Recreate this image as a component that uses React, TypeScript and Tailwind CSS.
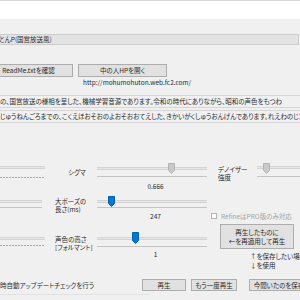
import React from 'react';

type Thumb = { left: number; top: number; h: number; color: 'gray' | 'blue' };

const ThumbIcon: React.FC<{ h: number; color: 'gray' | 'blue' }> = ({ h, color }) => {
  const fill = color === 'blue' ? '#0078d7' : '#c9c9c9';
  const stroke = color === 'blue' ? '#0063b1' : '#b4b4b4';
  return (
    <svg width="7" height={h} viewBox={`0 0 7 ${h}`}>
      <path d={`M0.5 0.5 H6.5 V${h - 3.5} L3.5 ${h - 0.5} L0.5 ${h - 3.5} Z`} fill={fill} stroke={stroke} strokeWidth="1" />
    </svg>
  );
};

// groove + tick line, thumb sits on top
const Track: React.FC<{
  width: string;
  grooveMt: string;
  tickMt: string;
  dotted?: boolean;
  thumb?: Thumb;
  value?: string;
  valueMt?: string;
}> = ({ width, grooveMt, tickMt, dotted, thumb, value, valueMt }) => (
  <div className={`relative flex flex-col shrink-0 ${width}`}>
    <div className={`h-[3px] bg-[#e6e6e6] border-y border-[#d4d4d4] ${grooveMt}`} />
    <div
      className={`h-px ${tickMt} ${
        dotted
          ? 'bg-[repeating-linear-gradient(90deg,#a8a8a8_0_2px,transparent_2px_3px)]'
          : 'bg-[#c4c4c4]'
      }`}
    />
    {value && <div className={`h-[7px] text-center pl-[7px] ${valueMt}`}>{value}</div>}
    {thumb && (
      <div className="absolute flex" style={{ left: thumb.left, top: thumb.top }}>
        <ThumbIcon h={thumb.h} color={thumb.color} />
      </div>
    )}
  </div>
);

const Button: React.FC<{ className: string; children: React.ReactNode }> = ({ className, children }) => (
  <div className={`flex items-center justify-center shrink-0 border border-[#adadad] bg-[#e1e1e1] ${className}`}>
    {children}
  </div>
);

const App: React.FC = () => {
  return (
    <div className="w-[300px] h-[300px] overflow-hidden bg-[#f0f0f0] text-[6.5px] leading-[7px] text-[#2a2a2a] whitespace-nowrap font-['Noto_Sans_CJK_JP',sans-serif] [font-feature-settings:'palt']">
      {/* top white strip */}
      <div className="h-[19px] bg-white border-t border-[#d8d8d8]" />

      {/* title box */}
      <div className="mt-[15px] h-[11px] w-[299px] flex items-center bg-[#e3e3e3] border-y border-r border-[#cccccc] overflow-hidden">
        <span className="-ml-px">とんP(国営放送風)</span>
      </div>

      {/* buttons */}
      <div className="mt-[19px] flex gap-[5px]">
        <Button className="ml-[-16px] w-[89px] h-[13px]">ReadMe.txtを確認</Button>
        <Button className="w-[89px] h-[13px]">中の人HPを開く</Button>
      </div>
      <div className="mt-[2px] ml-[83px] h-[7px]">http://mohumohuton.web.fc2.com/</div>

      {/* text lines */}
      <div className="mt-[9px] h-[13px] flex items-center border-y border-[#d6d6d6] overflow-hidden">
        の、国営放送の様相を呈した、機械学習音源であります。令和の時代にありながら、昭和の声色をもつわ
      </div>
      <div className="mt-[2px] h-[13px] flex items-center border-y border-[#d6d6d6] overflow-hidden">
        じゅうねんごろまでの、こくえほおそおのよおそおおてえした、きかいがくしゅうおんげんであります。れえわのじだいにありながら
      </div>

      {/* trackbars */}
      <div className="mt-[37px] flex">
        <div className="flex flex-col w-[207px] shrink-0">
          {/* sigma */}
          <div className="h-[35px] flex">
            <Track width="w-[45px]" grooveMt="mt-[6px]" tickMt="mt-[8px]" dotted />
            <div className="w-[52px] shrink-0 pl-[23px] mt-[9px]">シグマ</div>
            <Track
              width="w-[110px]"
              grooveMt="mt-[7px]"
              tickMt="mt-[6px]"
              thumb={{ left: 71, top: 3, h: 11, color: 'gray' }}
              value="0.666"
              valueMt="mt-[6px]"
            />
          </div>
          {/* pause */}
          <div className="h-[33px] flex">
            <Track width="w-[42px]" grooveMt="mt-[5px]" tickMt="mt-[4px]" />
            <div className="w-[55px] shrink-0 pl-[13px] mt-[2px] leading-[8px]">
              大ポーズの
              <br />
              長さ(ms)
            </div>
            <Track
              width="w-[110px]"
              grooveMt="mt-[5px]"
              tickMt="mt-[4px]"
              thumb={{ left: 11, top: 1, h: 11, color: 'blue' }}
              value="247"
              valueMt="mt-[5px]"
            />
          </div>
          {/* formant */}
          <div className="h-[34px] flex">
            <Track width="w-[45px]" grooveMt="mt-[9px]" tickMt="mt-[5px]" dotted />
            <div className="w-[52px] shrink-0 pl-[10px] mt-[7px] leading-[8px]">
              声色の高さ
              <br />
              [フォルマント]
            </div>
            <Track
              width="w-[110px]"
              grooveMt="mt-[9px]"
              tickMt="mt-[6px]"
              thumb={{ left: 35, top: 4, h: 12, color: 'blue' }}
              value="1"
              valueMt="mt-[4px]"
            />
          </div>
        </div>

        <div className="flex flex-col w-[93px] shrink-0">
          <div className="h-[35px] flex">
            <div className="w-[50px] shrink-0 pl-[11px] mt-[5px] leading-[8px]">
              デノイザー
              <br />
              強度
            </div>
            <Track
              width="w-[50px]"
              grooveMt="mt-[6px]"
              tickMt="mt-[7px]"
              thumb={{ left: 6, top: 3, h: 11, color: 'gray' }}
            />
          </div>
          <div className="mt-[18px] h-[6px] flex items-center">
            <div className="ml-[4px] w-[6px] h-[6px] border border-[#b5b5b5] bg-white shrink-0" />
            <span className="ml-[4px] text-[#a3a3a3]">RefineはPRO版のみ対応</span>
          </div>
          <Button className="mt-[5px] ml-[13px] w-[74px] h-[25px] flex-col leading-[9px]">
            <span>再生したものに</span>
            <span>←を再適用して再生</span>
          </Button>
          <div className="mt-[3px] ml-[43px] leading-[9px]">
            ↑を保存したい場合は
            <br />
            ↓を使用
          </div>
        </div>
      </div>

      {/* bottom row */}
      <div className="mt-[9px] h-[12px] flex items-center">
        <div className="w-[142px] shrink-0">時自動アップデートチェックを行う</div>
        <Button className="w-[44px] h-[12px]">再生</Button>
        <Button className="ml-[5px] w-[46px] h-[12px]">もう一度再生</Button>
        <Button className="ml-[12px] w-[60px] h-[12px]">今聞いたのを保存</Button>
      </div>
      <div className="mt-[3px] w-[150px] h-px bg-[#e2e2e2]" />
    </div>
  );
};

export default App;
